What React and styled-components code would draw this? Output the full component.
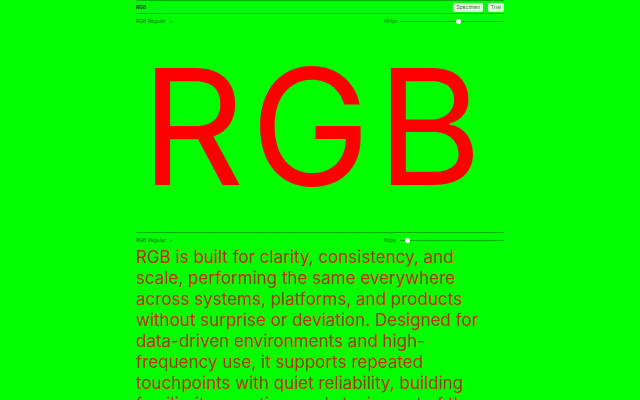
import React from "react";
import styled, { createGlobalStyle } from "styled-components";

const GlobalStyle = createGlobalStyle`
  html, body {
    margin: 0;
    padding: 0;
    background: #00ff00;
  }
  body {
    font-family: Inter, "Noto Sans", sans-serif;
    color: #ff0000;
    overflow: hidden;
  }
`;

const Page = styled.div`
  width: 368px;
  margin: 0 auto;
  border-top: 1px solid rgba(0, 0, 0, 0.3);
`;

const TopBar = styled.header`
  display: flex;
  align-items: center;
  justify-content: space-between;
  height: 12px;
  border-bottom: 1px solid rgba(0, 0, 0, 0.3);
`;

const Brand = styled.span`
  font-size: 5px;
  font-weight: 700;
  color: rgba(0, 0, 0, 0.8);
`;

const Nav = styled.nav`
  display: flex;
  gap: 5px;
`;

const NavButton = styled.button`
  font-family: inherit;
  font-size: 5px;
  line-height: 1;
  color: rgba(0, 0, 0, 0.7);
  background: rgba(255, 255, 255, 0.85);
  border: none;
  border-radius: 2px;
  padding: 2px 3px;
  cursor: pointer;
`;

const Section = styled.section`
  border-bottom: ${({ divided }) =>
    divided ? "1px solid rgba(0, 0, 0, 0.3)" : "none"};
`;

const Controls = styled.div`
  display: flex;
  align-items: center;
  justify-content: space-between;
  height: 14px;
`;

const StyleSelect = styled.span`
  display: flex;
  align-items: center;
  gap: 3px;
  font-size: 5px;
  color: rgba(0, 0, 0, 0.6);
`;

const SizeControl = styled.div`
  display: flex;
  align-items: center;
  gap: 3px;
  width: 120px;
`;

const SizeLabel = styled.span`
  font-size: 5px;
  color: rgba(0, 0, 0, 0.6);
  width: 13px;
`;

const Track = styled.div`
  position: relative;
  flex: 1;
  height: 1px;
  background: rgba(0, 0, 0, 0.3);
`;

const Thumb = styled.span`
  position: absolute;
  top: -2px;
  width: 5px;
  height: 5px;
  margin-left: -2.5px;
  border-radius: 50%;
  background: #fff;
`;

const Display = styled.div`
  font-size: 161px;
  line-height: 1;
  letter-spacing: 6px;
  padding: 18px 0 0 5px;
  height: 186px;
`;

const Body = styled.p`
  margin: 0;
  font-size: 17px;
  line-height: 21px;
  color: #c03008;
`;

const Chevron = () => (
  <svg width="4" height="3" viewBox="0 0 8 5" fill="none">
    <path d="M1 1l3 3 3-3" stroke="rgba(0,0,0,0.6)" strokeWidth="1" />
  </svg>
);

const Slider = ({ label, pos }) => (
  <SizeControl>
    <SizeLabel>{label}</SizeLabel>
    <Track>
      <Thumb style={{ left: `${pos}%` }} />
    </Track>
  </SizeControl>
);

export default function App() {
  return (
    <>
      <GlobalStyle />
      <Page>
        <TopBar>
          <Brand>RGB</Brand>
          <Nav>
            <NavButton>Specimen</NavButton>
            <NavButton>Trial</NavButton>
          </Nav>
        </TopBar>
        <Section divided>
          <Controls>
            <StyleSelect>
              RGB Regular <Chevron />
            </StyleSelect>
            <Slider label="561px" pos={56} />
          </Controls>
          <Display>RGB</Display>
        </Section>
        <Section>
          <Controls>
            <StyleSelect>
              RGB Regular <Chevron />
            </StyleSelect>
            <Slider label="60px" pos={7} />
          </Controls>
          <Body>
            RGB is built for clarity, consistency, and scale, performing the
            same everywhere across systems, platforms, and products without
            surprise or deviation. Designed for data-driven environments and
            high-frequency use, it supports repeated touchpoints with quiet
            reliability, building familiarity over time and staying out of the
            way of the work it serves.
          </Body>
        </Section>
      </Page>
    </>
  );
}
